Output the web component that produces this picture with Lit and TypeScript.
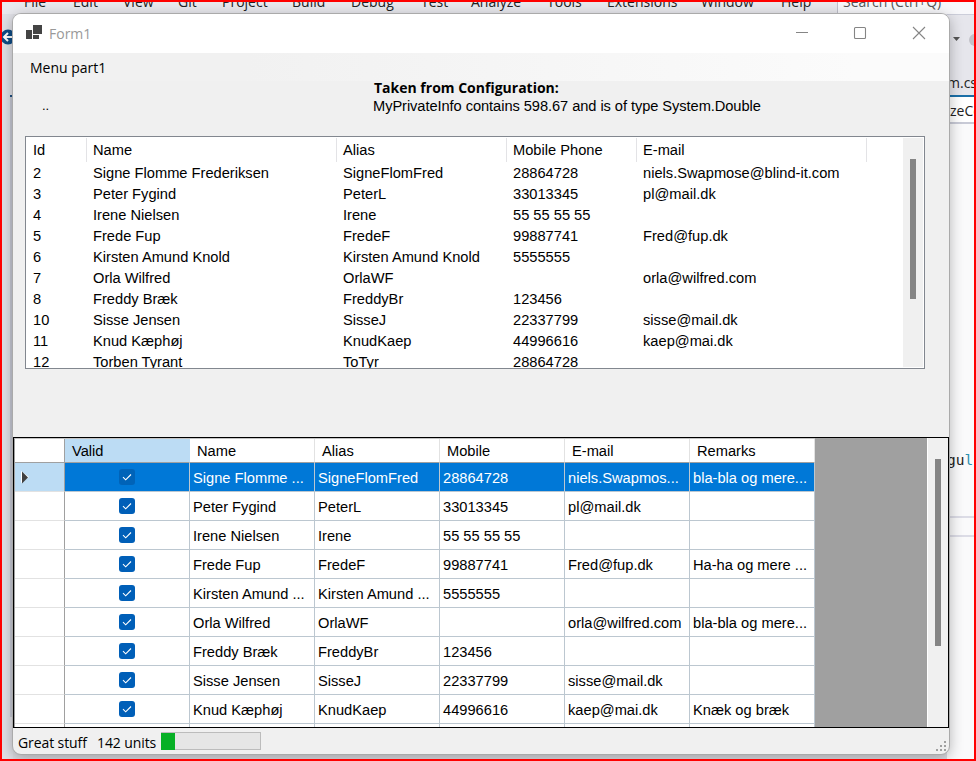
import { LitElement, html, css, svg } from "lit";
import { customElement } from "lit/decorators.js";
import { classMap } from "lit/directives/class-map.js";
import { styleMap } from "lit/directives/style-map.js";

const MENUS: [string, number][] = [
  ["File", 49], ["Edit", 50], ["View", 55], ["Git", 44], ["Project", 70], ["Build", 59], ["Debug", 70],
  ["Test", 50], ["Analyze", 76], ["Tools", 60], ["Extensions", 94], ["Window", 80], ["Help", 56],
];

const LIST_COLUMNS: [string, number][] = [
  ["Id", 60], ["Name", 250], ["Alias", 170], ["Mobile Phone", 130], ["E-mail", 230],
];

const CONTACTS: string[][] = [
  ["2", "Signe Flomme Frederiksen", "SigneFlomFred", "28864728", "niels.Swapmose@blind-it.com"],
  ["3", "Peter Fygind", "PeterL", "33013345", "pl@mail.dk"],
  ["4", "Irene Nielsen", "Irene", "55 55 55 55", ""],
  ["5", "Frede Fup", "FredeF", "99887741", "Fred@fup.dk"],
  ["6", "Kirsten Amund Knold", "Kirsten Amund Knold", "5555555", ""],
  ["7", "Orla Wilfred", "OrlaWF", "", "orla@wilfred.com"],
  ["8", "Freddy Bræk", "FreddyBr", "123456", ""],
  ["10", "Sisse Jensen", "SisseJ", "22337799", "sisse@mail.dk"],
  ["11", "Knud Kæphøj", "KnudKaep", "44996616", "kaep@mai.dk"],
  ["12", "Torben Tyrant", "ToTyr", "28864728", ""],
];

const GRID_COLUMNS = ["Name", "Alias", "Mobile", "E-mail", "Remarks"];

const GRID_ROWS: string[][] = [
  ["Signe Flomme ...", "SigneFlomFred", "28864728", "niels.Swapmos...", "bla-bla og mere..."],
  ["Peter Fygind", "PeterL", "33013345", "pl@mail.dk", ""],
  ["Irene Nielsen", "Irene", "55 55 55 55", "", ""],
  ["Frede Fup", "FredeF", "99887741", "Fred@fup.dk", "Ha-ha og mere ..."],
  ["Kirsten Amund ...", "Kirsten Amund ...", "5555555", "", ""],
  ["Orla Wilfred", "OrlaWF", "", "orla@wilfred.com", "bla-bla og mere..."],
  ["Freddy Bræk", "FreddyBr", "123456", "", ""],
  ["Sisse Jensen", "SisseJ", "22337799", "sisse@mail.dk", ""],
  ["Knud Kæphøj", "KnudKaep", "44996616", "kaep@mai.dk", "Knæk og bræk"],
];

@customElement("contact-list")
export class ContactList extends LitElement {
  static styles = css`
    :host { display: flex; box-sizing: border-box; width: 900px; height: 233px; border: 1px solid #82878f;
      background: #fff; padding: 1px; overflow: hidden; font: 14.667px "Liberation Sans", Arial, sans-serif; color: #000; }
    .table { flex: 1; min-width: 0; }
    .row { display: flex; height: 21px; line-height: 23px; }
    .cell { box-sizing: border-box; flex: none; padding-left: 6px; white-space: pre; }
    .head { height: 24px; line-height: 25px; }
    .head .cell { border-right: 1px solid #e3e3e6; height: 24px; }
    .track { width: 20px; background: #f0f0f0; padding: 21px 0 0 7px; box-sizing: border-box; }
    .thumb { width: 6px; height: 140px; background: #858585; }
  `;
  render() {
    const w = (i: number) => styleMap({ width: `${LIST_COLUMNS[i][1]}px` });
    return html`
      <div class="table">
        <div class="row head">${LIST_COLUMNS.map(([t], i) => html`<div class="cell" style=${w(i)}>${t}</div>`)}</div>
        ${CONTACTS.map((r) => html`<div class="row">${r.map((t, i) => html`<div class="cell" style=${w(i)}>${t}</div>`)}</div>`)}
      </div>
      <div class="track"><div class="thumb"></div></div>`;
  }
}

@customElement("contact-grid")
export class ContactGrid extends LitElement {
  static styles = css`
    :host { display: flex; box-sizing: border-box; height: 291px; border: 1px solid #000; background: #a0a0a0;
      overflow: hidden; font: 14.667px "Liberation Sans", Arial, sans-serif; color: #000; }
    .table { width: 801px; box-sizing: border-box; border-top: 1px solid #c4c4c4; border-left: 1px solid #a0a0a0; background: #fff; flex: none; }
    .row { display: grid; grid-template-columns: 50px repeat(6, 125px); grid-template-rows: 100%; height: 29px; line-height: 30px; }
    .head { height: 24px; line-height: 25px; }
    .cell { box-sizing: border-box; border-right: 1px solid #bcc7d0; border-bottom: 1px solid #bcc7d0; padding-left: 3px; white-space: pre; }
    .stub { border-right-color: #a0a0a0; border-bottom-color: #e2e2e2; padding-left: 6px; display: flex; align-items: center; }
    .head .cell { border-right-color: #e2e2e2; border-bottom-color: #a0a0a0; padding-left: 7px; }
    .head .stub { border-right-color: #a0a0a0; }
    .head .valid { background: #bcdcf4; border-right-color: #bcdcf4; }
    .check { display: flex; justify-content: center; align-items: center; padding: 0; }
    .selected .cell { background: #0078d7; color: #fff; }
    .selected .stub { background: #bcdcf4; }
    .spacer { flex: 1; }
    .track { width: 21px; background: #f0f0f0; padding: 21px 0 0 7px; box-sizing: border-box; border-left: 1px solid #fff; }
    .thumb { width: 6px; height: 187px; background: #858585; }
    svg { display: block; }
  `;
  private box(selected: boolean) {
    return html`<svg width="16" height="16" viewBox="0 0 16 16">
      <rect width="16" height="16" rx="3" fill=${selected ? "#0063b8" : "#005fb8"}></rect>
      <path d="M4 8.200 6.700 10.800 12 5.500" fill="none" stroke="#fff" stroke-width="1.1"></path></svg>`;
  }
  render() {
    return html`
      <div class="table">
        <div class="row head"><div class="cell stub"></div><div class="cell valid">Valid</div>
          ${GRID_COLUMNS.map((t) => html`<div class="cell">${t}</div>`)}</div>
        ${GRID_ROWS.map((r, i) => html`<div class=${classMap({ row: true, selected: i === 0 })}>
          <div class="cell stub">${i === 0
            ? html`<svg width="9" height="14" viewBox="0 0 9 14"><path d="M0 1v12L8 7z" fill="#fff"></path><path d="M1 1.500v12L7 7.500z" fill="#404040"></path></svg>`
            : ""}</div>
          <div class="cell check">${this.box(i === 0)}</div>
          ${r.map((t) => html`<div class="cell">${t}</div>`)}</div>`)}
        <div class="row"><div class="cell stub"></div>${[0, 1, 2, 3, 4, 5].map(() => html`<div class="cell"></div>`)}</div>
      </div>
      <div class="spacer"></div>
      <div class="track"><div class="thumb"></div></div>`;
  }
}

@customElement("form-window")
export class FormWindow extends LitElement {
  static styles = css`
    :host { display: flex; flex-direction: column; box-sizing: border-box; width: 938px; height: 742px;
      background: #f0f0f0; border: 1px solid #aaa; border-radius: 9px; overflow: hidden;
      box-shadow: 0 3px 14px rgba(0, 0, 0, 0.28); font: 14px "Open Sans", "Noto Sans", sans-serif; color: #000; }
    .title { display: flex; align-items: center; height: 39px; box-sizing: border-box; padding: 0 0 2px 13px; background: #fff; color: #999; flex: none; }
    .name { margin-left: 6px; padding-top: 2px; flex: 1; font-size: 14px; }
    .controls { margin-right: 23px; }
    .menu { height: 28px; line-height: 29px; padding-left: 17px; background: linear-gradient(90deg, #f1f1f1 25%, #fbfbfb 90%); flex: none; }
    .info { display: grid; grid-template-columns: 360px auto; height: 55px; flex: none; }
    .dots { padding: 16px 0 0 29px; font: 13px/18px "Liberation Sans", sans-serif; }
    .heading { font: bold 14px/14px "Open Sans", sans-serif; padding-left: 1px; }
    .value { font: 14.667px/18px "Liberation Sans", Arial, sans-serif; letter-spacing: -0.07px; margin-top: 2px; }
    contact-list { margin: 0 0 68px 12px; flex: none; }
    contact-grid { flex: none; }
    .status { display: flex; align-items: center; flex: 1; padding-left: 5px; white-space: nowrap; padding-top: 2px; letter-spacing: -0.1px; }
    .stuff { width: 79px; }
    .units { width: 64px; }
    .bar { width: 98px; height: 16px; border: 1px solid #bcbcbc; background: #e6e6e6; margin-top: -3px; }
    .fill { width: 14px; height: 17px; margin: 0 0 0 -1px; background: #06b025; }
    .grip { margin: 7px 3px 0 auto; }
  `;
  render() {
    const dots = [[8, 0], [4, 4], [8, 4], [0, 8], [4, 8], [8, 8]];
    return html`
      <div class="title">
        <svg width="17" height="16" viewBox="0 0 17 16" fill="#444">
          <path d="M7 0h9v9H7zM0 5h6v9H0zM7 10h6v4H7z"></path></svg>
        <span class="name">Form1</span>
        <svg class="controls" width="130" height="14" viewBox="0 0 130 14" fill="none" stroke="#858585" stroke-width="1.1">
          <path d="M0 6.500h12"></path><rect x="58.5" y="1.5" width="11" height="11" rx="1"></rect>
          <path d="M117 1l12 12M129 1l-12 12"></path></svg>
      </div>
      <div class="menu"><span class="item">Menu part1</span></div>
      <div class="info">
        <div class="dots">..</div>
        <div><div class="heading">Taken from Configuration:</div>
          <div class="value">MyPrivateInfo contains 598.67 and is of type System.Double</div></div>
      </div>
      <contact-list></contact-list>
      <contact-grid></contact-grid>
      <div class="status">
        <span class="stuff">Great stuff</span><span class="units">142 units</span>
        <div class="bar"><div class="fill"></div></div>
        <svg class="grip" width="10" height="10" viewBox="0 0 10 10" fill="#a0a0a0">
          ${dots.map(([x, y]) => svg`<rect x=${x} y=${y} width="2" height="2"></rect>`)}</svg>
      </div>`;
  }
}

@customElement("app-root")
export class AppRoot extends LitElement {
  static styles = css`
    :host { display: block; position: relative; box-sizing: border-box; width: 976px; height: 761px; overflow: hidden;
      border: 2px solid #f00; background: #dcdce2; font: 14px "Open Sans", sans-serif; color: #222; }
    .menubar { display: flex; height: 12px; padding-left: 22px; background: #e9e9ee; }
    .menubar span { flex: none; line-height: 20px; margin-top: -10px; }
    .menubar .search { width: 133px; height: 12px; background: #f8f8fb; border-left: 1px solid #c0c0cc; padding-left: 5px; color: #555; white-space: nowrap; }
    .search div { line-height: 20px; margin-top: -10px; }
    .body { display: flex; justify-content: space-between; height: 745px; }
    .left { width: 11px; background: #e0e0e6; }
    .back { display: block; margin: 15px 0 0 0; }
    .edge { height: 620px; margin: 50px 0 0 8px; background: #c6c8d4; border-top: 2px solid #1d4f80; }
    .right { width: 27px; background: #fafafb; overflow: hidden; }
    .right > div { white-space: nowrap; }
    .tools { height: 56px; background: #e6e6ec; border-top: 1px solid #ccceda; box-sizing: border-box; }
    .tools svg { display: block; }
    .tab { height: 25px; line-height: 25px; background: #e6e6ec; border-bottom: 2px solid #1b6fa8; }
    .crumb { height: 25px; line-height: 27px; border-bottom: 2px solid #c8cad6; background: #fff; padding-left: 3px; }
    .code { font: 14.5px/20px "DejaVu Sans Mono", monospace; margin-top: 326px; height: 66px; }
    .teal { color: #2b91af; }
    .split { height: 17px; border-top: 2px solid #dcdce6; border-bottom: 2px solid #dcdce6; }
    form-window { position: absolute; left: 10px; top: 11px; }
  `;
  render() {
    return html`
      <div class="menubar">
        ${MENUS.map(([t, w]) => html`<span style=${styleMap({ width: `${w}px` })}>${t}</span>`)}
        <div class="search"><div>Search (Ctrl+Q)</div></div>
      </div>
      <div class="body">
        <div class="left">
          <svg class="back" width="14" height="16" viewBox="0 0 14 16"><circle cx="6" cy="8" r="7.5" fill="#0f4c85"></circle>
            <path d="M12 8H2M6 4 2 8l4 4" fill="none" stroke="#fff" stroke-width="2"></path></svg>
          <div class="edge"></div>
        </div>
        <div class="right">
          <div class="tools"><svg width="27" height="50" viewBox="0 0 27 50"><path d="M6 22h7l-3.500 4z" fill="#555"></path>
            <circle cx="28" cy="25" r="6" fill="#c2c2c8"></circle></svg></div>
          <div class="tab">m.cs</div>
          <div class="crumb">zeCo</div>
          <div class="code">gu<span class="teal">l</span></div>
          <div class="split"></div>
        </div>
      </div>
      <form-window></form-window>`;
  }
}
